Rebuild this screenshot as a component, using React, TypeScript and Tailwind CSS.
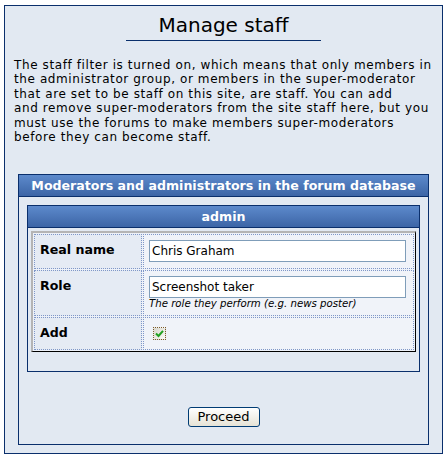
import React from "react";

function Checkbox() {
  return (
    <div className="w-[13px] h-[13px] border border-dotted border-[#7a5a2e] bg-gradient-to-br from-[#d8d6cc] to-[#fbfbf8] flex items-center justify-center">
      <svg width="9" height="9" viewBox="0 0 9 9">
        <path d="M1 4.5 L3.5 7 L8 1.8" stroke="#21a121" strokeWidth="2" fill="none" />
      </svg>
    </div>
  );
}

export default function App() {
  const navy = "border-[#0a2f6c]";
  return (
    <div className="bg-white min-h-[457px] pt-[5px] pl-[4px] font-['DejaVu_Sans',Verdana,sans-serif] text-black">
      <div className={`w-[439px] border ${navy} bg-[#e2e9f2]`}>
        {/* Title */}
        <div className="pt-[7px] text-center">
          <span className={`inline-block px-[32px] pb-[3px] border-b ${navy} text-[20px] leading-[24px]`}>
            Manage staff
          </span>
        </div>
        <p className="mt-[17px] px-[9px] text-[12px] leading-[14.4px] tracking-[0.6px] whitespace-nowrap">
          The staff filter is turned on, which means that only members in
          <br />
          the administrator group, or members in the super-moderator
          <br />
          that are set to be staff on this site, are staff. You can add
          <br />
          and remove super-moderators from the site staff here, but you
          <br />
          must use the forums to make members super-moderators
          <br />
          before they can become staff.
        </p>

        {/* Panel */}
        <div className={`mt-[29.6px] mx-[13px] mb-[8px] border ${navy}`}>
          <div className={`h-[22px] border-b ${navy} bg-gradient-to-b from-[#5d8acc] to-[#3c65a6] text-white font-bold text-[12.6px] leading-[21px] text-center`}>
            Moderators and administrators in the forum database
          </div>
          <div className="p-[8px] pb-[17px]">
            <div className={`border ${navy}`}>
              <div className={`h-[22px] border-b ${navy} bg-gradient-to-b from-[#5d8acc] to-[#3c65a6] text-white font-bold text-[12.6px] leading-[21px] text-center`}>
                admin
              </div>
              <div className="p-[3px] pb-[19px]">
                <div className="border-l-2 border-t-2 border-[#b4b4b4] border-r border-b border-r-black border-b-black bg-[#edf1f8] p-[1px] grid grid-cols-[108px_271px] gap-[1px]">
                  {/* Row 1 */}
                  <div className="h-[35px] border border-dotted border-[#7f97c8] bg-[#e5ebf4] pl-[5px] pt-[7px] font-bold text-[12.6px] leading-[15px]">
                    Real name
                  </div>
                  <div className="h-[35px] border border-dotted border-[#7f97c8] bg-[#f0f3f9] pl-[5px] pt-[5px]">
                    <div className="w-[257px] h-[22px] border border-[#7f9db9] bg-white pl-[2px] text-[12px] leading-[20px]">
                      Chris Graham
                    </div>
                  </div>
                  {/* Row 2 */}
                  <div className="h-[46px] border border-dotted border-[#7f97c8] bg-[#e5ebf4] pl-[5px] pt-[7px] font-bold text-[12.6px] leading-[15px]">
                    Role
                  </div>
                  <div className="h-[46px] border border-dotted border-[#7f97c8] bg-[#f0f3f9] pl-[5px] pt-[5px]">
                    <div className="w-[257px] h-[22px] border border-[#7f9db9] bg-white pl-[2px] text-[12px] leading-[20px]">
                      Screenshot taker
                    </div>
                    <div className="italic text-[10.2px] leading-[12px]">
                      The role they perform (e.g. news poster)
                    </div>
                  </div>
                  {/* Row 3 */}
                  <div className="h-[33px] border border-dotted border-[#7f97c8] bg-[#e5ebf4] pl-[5px] pt-[7px] font-bold text-[12.6px] leading-[15px]">
                    Add
                  </div>
                  <div className="h-[33px] border border-dotted border-[#7f97c8] bg-[#f0f3f9] pl-[9px] pt-[9px]">
                    <Checkbox />
                  </div>
                </div>
              </div>
            </div>
            <div className="mt-[35px] flex justify-center">
              <button className="w-[72px] h-[20px] rounded-[3px] border border-[#003c74] bg-gradient-to-b from-white to-[#e6e3d6] text-[13px] leading-[18px] text-black">
                Proceed
              </button>
            </div>
          </div>
        </div>
      </div>
    </div>
  );
}
